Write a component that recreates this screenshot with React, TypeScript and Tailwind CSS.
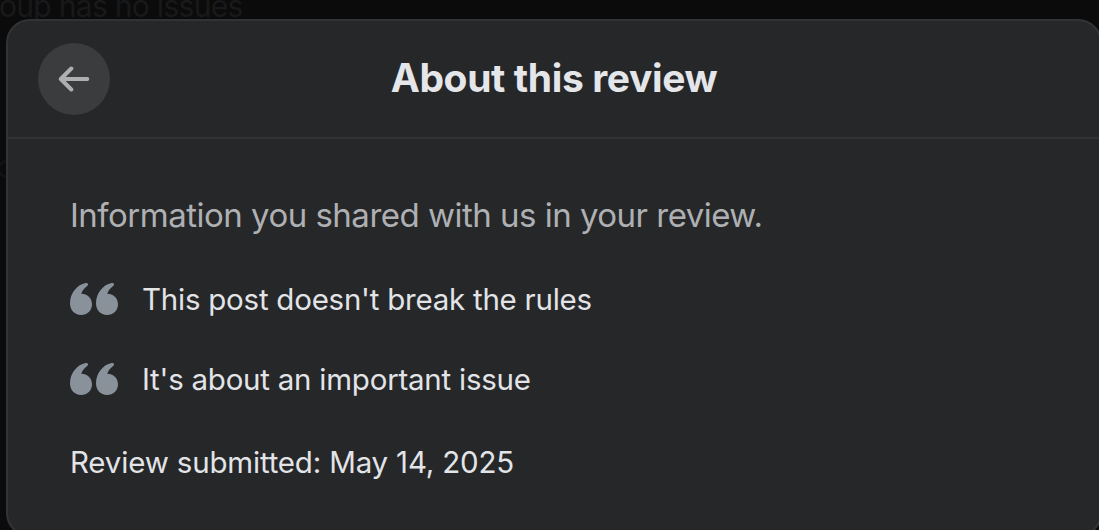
import React from 'react';

const reasons = [
  "This post doesn't break the rules",
  "It's about an important issue",
];

const QuoteIcon = () => (
  <svg className="h-[32px] w-[48px] shrink-0 fill-[#89919b]" viewBox="0 0 48 32">
    <path d="M11 32C4.6 32 0 27.2 0 20.3C0 10.2 7.2 1.6 15.6 0.1C17.9-0.3 18.8 1.5 17.3 2.8C14.2 5.4 12.3 7.8 11.3 10.8C17.4 10.8 22 15.2 22 21.2C22 27.4 17.3 32 11 32Z" />
    <path d="M37 32C30.6 32 26 27.2 26 20.3C26 10.2 33.2 1.6 41.6 0.1C43.9-0.3 44.8 1.5 43.3 2.8C40.2 5.4 38.3 7.8 37.3 10.8C43.4 10.8 48 15.2 48 21.2C48 27.4 43.3 32 37 32Z" />
  </svg>
);

const BackArrow = () => (
  <svg
    className="h-[32px] w-[32px] fill-none stroke-[#adafb1]"
    viewBox="0 0 32 32"
    strokeWidth="4"
    strokeLinecap="round"
    strokeLinejoin="round"
  >
    <path d="M13.3 5.5L2.8 16L13.3 26.5M3.5 16H29.3" />
  </svg>
);

const App = () => {
  return (
    <div className="relative h-[530px] w-[1099px] overflow-hidden bg-[#0b0b0b] font-['Inter',sans-serif]">
      {/* dimmed page behind the dialog */}
      <div className="absolute left-[-1px] top-[-12px] whitespace-nowrap text-[30px] leading-[36px] tracking-[-0.7px] text-[#18191a]">
        oup has no issues
      </div>
      <div className="absolute left-[-2px] top-[160px] h-[18px] w-[18px] rounded-full border-2 border-[#141516]" />

      <div className="relative ml-[6px] mt-[19px] h-[518px] w-[1096px] rounded-[24px] border-2 border-[#323334] bg-[#262729]">
        <header className="relative flex h-[118px] items-center justify-center border-b-2 border-[#323334]">
          <button
            aria-label="Back"
            className="absolute left-[30px] top-[22px] flex h-[72px] w-[72px] items-center justify-center rounded-full bg-[#3b3c3e]"
          >
            <BackArrow />
          </button>
          <h1 className="mb-[2px] whitespace-nowrap text-[39px] font-bold leading-[48px] tracking-[-0.37px] text-[#e4e6e9]">
            About this review
          </h1>
        </header>

        <main className="pl-[62px] pt-[56px]">
          <p className="whitespace-nowrap text-[33px] leading-[40px] tracking-[-0.51px] text-[#aeb0b3]">
            Information you shared with us in your review.
          </p>
          <ul className="mt-[44px] flex flex-col gap-[40px]">
            {reasons.map((reason) => (
              <li key={reason} className="flex h-[40px] items-center">
                <QuoteIcon />
                <span className="ml-[24px] whitespace-nowrap text-[29.5px] leading-[40px] tracking-[-0.24px] text-[#e2e4e7]">
                  {reason}
                </span>
              </li>
            ))}
          </ul>
          <p className="mt-[43px] whitespace-nowrap text-[29.5px] leading-[40px] tracking-[-0.18px] text-[#e2e4e7]">
            Review submitted: May 14, 2025
          </p>
        </main>
      </div>
    </div>
  );
};

export default App;
